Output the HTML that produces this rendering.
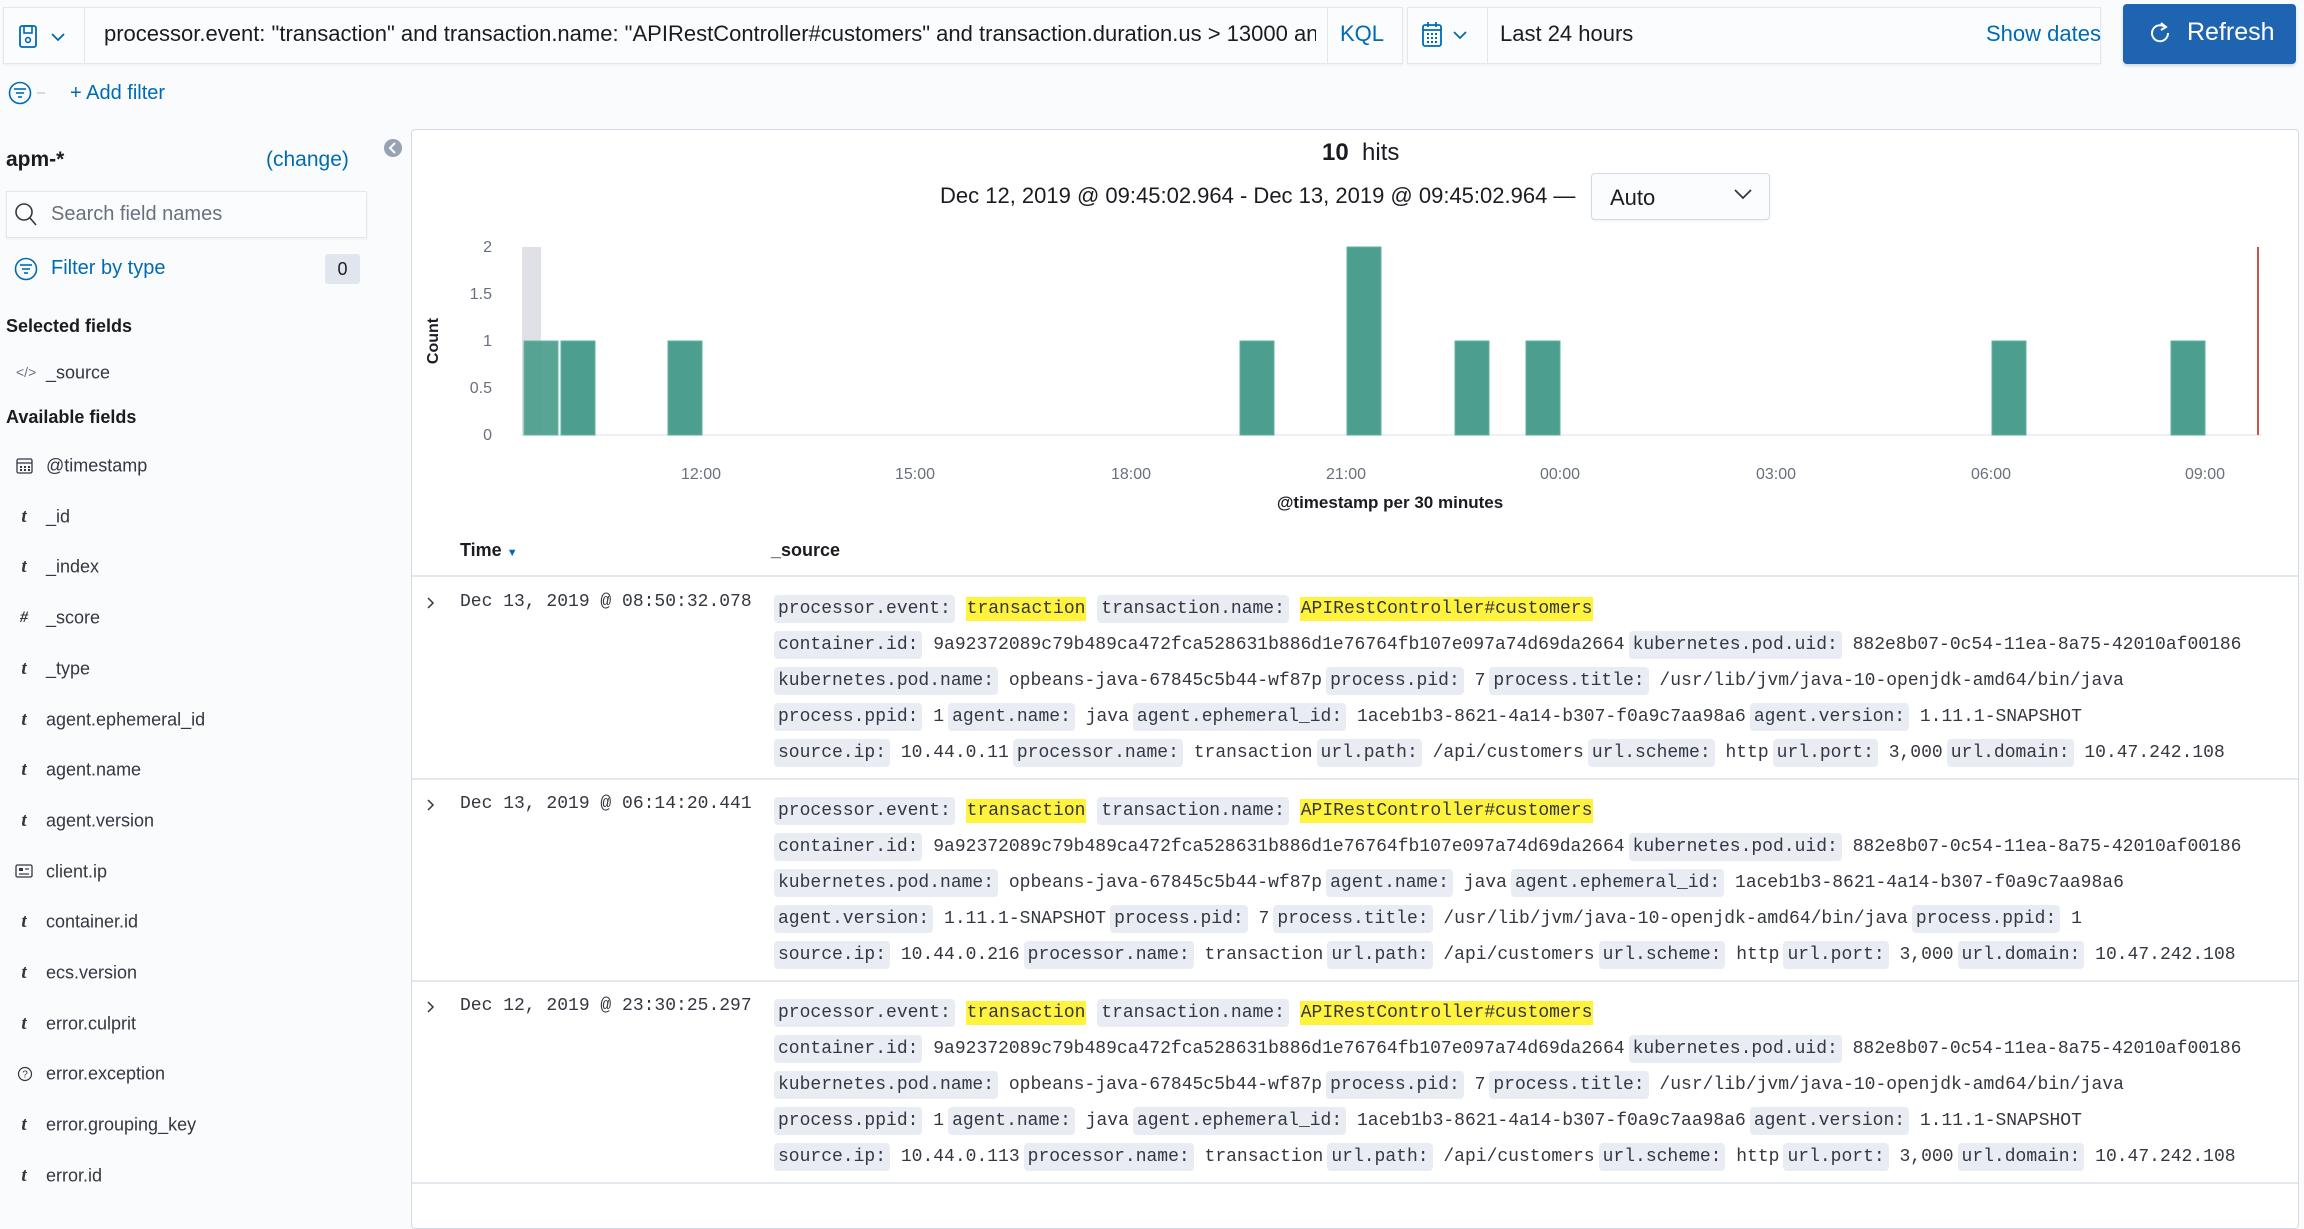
<!DOCTYPE html>
<html><head><meta charset="utf-8"><style>
*{box-sizing:border-box;margin:0;padding:0}
body{width:2304px;height:1192px;overflow:hidden;background:#fafbfd;font-family:"Liberation Sans",sans-serif;color:#343741;position:relative}
.abs{position:absolute}
.box{position:absolute;background:#fbfcfd;border:1px solid #e3e7ee;box-shadow:0 1px 2px rgba(0,0,0,.06)}
.blue{color:#006bb4}
.fld{position:absolute;left:46px;font-size:18px;color:#343741;transform:translateY(-50%)}
.ic{position:absolute;left:16px;width:16px;text-align:center;font-weight:bold;font-style:italic;font-family:"Liberation Serif",serif;font-size:19px;transform:translateY(-50%);color:#343741}
.mono{font-family:"Liberation Mono",monospace;font-size:18px;color:#343741}
.ln{position:absolute;left:774px;white-space:nowrap;line-height:30px;height:30px}
.k{background:#e9edf3;border-radius:4px;padding:4px 4px}
.h{background:#fff33d;padding:2px 1px}
.v{margin-right:4px}
.row{position:absolute;left:412px;width:1886px;border-top:2px solid #e3e7ee}
</style></head><body>

<!-- query bar -->
<div class="box" style="left:3px;top:7px;width:1400px;height:57px"></div>
<div class="abs" style="left:84px;top:8px;width:1px;height:55px;background:#e3e7ee"></div>
<div class="abs" style="left:1327px;top:8px;width:1px;height:55px;background:#e3e7ee"></div>
<svg class="abs" style="left:18px;top:24px" width="56" height="26" viewBox="0 0 56 26"><rect x="2" y="2" width="16" height="21" rx="2" fill="none" stroke="#006bb4" stroke-width="1.8"/><rect x="6" y="2" width="8" height="7" fill="none" stroke="#006bb4" stroke-width="1.6"/><circle cx="10" cy="16" r="2.4" fill="none" stroke="#006bb4" stroke-width="1.6"/><path d="M34 10 l6 6 l6 -6" fill="none" stroke="#006bb4" stroke-width="1.8"/></svg>
<div class="abs" style="left:104px;top:21px;width:1212px;overflow:hidden;white-space:nowrap;font-size:22px;color:#1a1c21">processor.event: "transaction" and transaction.name: "APIRestController#customers" and transaction.duration.us &gt; 13000 and</div>
<div class="abs blue" style="left:1340px;top:21px;font-size:22px">KQL</div>

<div class="box" style="left:1407px;top:7px;height:57px;width:694px"></div>
<div class="abs" style="left:1487px;top:8px;width:1px;height:55px;background:#e3e7ee"></div>
<svg class="abs" style="left:1420px;top:20px" width="60" height="32" viewBox="0 0 60 32"><rect x="3" y="5" width="18" height="21" rx="2" fill="none" stroke="#006bb4" stroke-width="1.8"/><line x1="3" y1="10" x2="21" y2="10" stroke="#006bb4" stroke-width="1.8"/><line x1="8" y1="2" x2="8" y2="7" stroke="#006bb4" stroke-width="1.8"/><line x1="16" y1="2" x2="16" y2="7" stroke="#006bb4" stroke-width="1.8"/><g fill="#006bb4"><rect x="7" y="13" width="2" height="2"/><rect x="11" y="13" width="2" height="2"/><rect x="15" y="13" width="2" height="2"/><rect x="7" y="17" width="2" height="2"/><rect x="11" y="17" width="2" height="2"/><rect x="15" y="17" width="2" height="2"/><rect x="7" y="21" width="2" height="2"/><rect x="11" y="21" width="2" height="2"/><rect x="15" y="21" width="2" height="2"/></g><path d="M34 12 l6 6 l6 -6" fill="none" stroke="#006bb4" stroke-width="1.8"/></svg>
<div class="abs" style="left:1500px;top:21px;font-size:22px;color:#1a1c21">Last 24 hours</div>
<div class="abs blue" style="left:1986px;top:21px;font-size:22px">Show dates</div>

<div class="abs" style="left:2123px;top:4px;width:173px;height:60px;background:#1e64b0;border-radius:4px;box-shadow:0 2px 3px rgba(0,0,0,.15)"></div>
<svg class="abs" style="left:2149px;top:21px" width="24" height="26" viewBox="0 0 24 26"><path d="M16 6 A8 8 0 1 0 19 12" fill="none" stroke="#fff" stroke-width="2"/><path d="M12 2 L17 6 L12 9" fill="none" stroke="#fff" stroke-width="2"/></svg>
<div class="abs" style="left:2187px;top:18px;font-size:25px;color:#fff">Refresh</div>

<!-- add filter -->
<svg class="abs" style="left:8px;top:81px" width="50" height="26" viewBox="0 0 50 26"><circle cx="12" cy="12" r="10.5" fill="none" stroke="#006bb4" stroke-width="1.6"/><line x1="6" y1="8" x2="18" y2="8" stroke="#006bb4" stroke-width="1.6"/><line x1="8" y1="12" x2="16" y2="12" stroke="#006bb4" stroke-width="1.6"/><line x1="10" y1="16" x2="14" y2="16" stroke="#006bb4" stroke-width="1.6"/><line x1="29" y1="12" x2="37" y2="12" stroke="#c5ccd6" stroke-width="1.4"/></svg>
<div class="abs blue" style="left:70px;top:82px;font-size:20px">+ Add filter</div>

<!-- sidebar -->
<div class="abs" style="left:6px;top:148px;font-size:21px;font-weight:bold;color:#1a1c21">apm-*</div>
<div class="abs blue" style="left:266px;top:148px;font-size:21px">(change)</div>
<div class="box" style="left:6px;top:191px;width:361px;height:47px;background:#fbfcfd"></div>
<svg class="abs" style="left:14px;top:202px" width="24" height="26" viewBox="0 0 24 26"><circle cx="10" cy="10" r="8" fill="none" stroke="#343741" stroke-width="1.6"/><line x1="16" y1="16" x2="22" y2="23" stroke="#343741" stroke-width="1.6"/></svg>
<div class="abs" style="left:51px;top:203px;font-size:20px;color:#69707d">Search field names</div>
<svg class="abs" style="left:14px;top:257px" width="26" height="26" viewBox="0 0 26 26"><circle cx="12" cy="12" r="10.5" fill="none" stroke="#006bb4" stroke-width="1.6"/><line x1="6" y1="8" x2="18" y2="8" stroke="#006bb4" stroke-width="1.6"/><line x1="8" y1="12" x2="16" y2="12" stroke="#006bb4" stroke-width="1.6"/><line x1="10" y1="16" x2="14" y2="16" stroke="#006bb4" stroke-width="1.6"/></svg>
<div class="abs blue" style="left:51px;top:257px;font-size:20px">Filter by type</div>
<div class="abs" style="left:325px;top:254px;width:35px;height:30px;background:#e0e5ee;border-radius:3px;text-align:center;line-height:30px;font-size:18px;color:#1a1c21">0</div>
<div class="abs" style="left:6px;top:316px;font-size:18px;font-weight:bold;color:#1a1c21">Selected fields</div>
<div class="abs" style="left:16px;top:364px;font-size:14px;color:#69707d">&lt;/&gt;</div>
<div class="fld" style="top:373px">_source</div>
<div class="abs" style="left:6px;top:407px;font-size:18px;font-weight:bold;color:#1a1c21">Available fields</div>

<svg class="abs" style="left:16px;top:457px" width="18" height="18" viewBox="0 0 18 18"><rect x="1" y="2" width="15" height="14" rx="1.5" fill="none" stroke="#343741" stroke-width="1.3"/><line x1="1" y1="6" x2="16" y2="6" stroke="#343741" stroke-width="1.3"/><g fill="#343741"><rect x="4" y="9" width="2" height="2"/><rect x="8" y="9" width="2" height="2"/><rect x="12" y="9" width="2" height="2"/><rect x="4" y="12" width="2" height="2"/><rect x="8" y="12" width="2" height="2"/><rect x="12" y="12" width="2" height="2"/></g></svg>
<div class="fld" style="top:466px">@timestamp</div>
<div class="ic" style="top:517px">t</div><div class="fld" style="top:517px">_id</div>
<div class="ic" style="top:567px">t</div><div class="fld" style="top:567px">_index</div>
<div class="ic" style="top:618px;font-size:16px">#</div><div class="fld" style="top:618px">_score</div>
<div class="ic" style="top:669px">t</div><div class="fld" style="top:669px">_type</div>
<div class="ic" style="top:720px">t</div><div class="fld" style="top:720px">agent.ephemeral_id</div>
<div class="ic" style="top:770px">t</div><div class="fld" style="top:770px">agent.name</div>
<div class="ic" style="top:821px">t</div><div class="fld" style="top:821px">agent.version</div>
<svg class="abs" style="left:15px;top:863px" width="18" height="16" viewBox="0 0 18 16"><rect x="1" y="2" width="16" height="12" rx="1.5" fill="none" stroke="#343741" stroke-width="1.3"/><rect x="4" y="5" width="4" height="3" fill="#343741"/><line x1="10" y1="6" x2="14" y2="6" stroke="#343741" stroke-width="1.2"/><line x1="4" y1="11" x2="14" y2="11" stroke="#343741" stroke-width="1.2"/></svg>
<div class="fld" style="top:872px">client.ip</div>
<div class="ic" style="top:922px">t</div><div class="fld" style="top:922px">container.id</div>
<div class="ic" style="top:973px">t</div><div class="fld" style="top:973px">ecs.version</div>
<div class="ic" style="top:1024px">t</div><div class="fld" style="top:1024px">error.culprit</div>
<svg class="abs" style="left:17px;top:1066px" width="16" height="16" viewBox="0 0 16 16"><circle cx="8" cy="8" r="6.5" fill="none" stroke="#343741" stroke-width="1.2"/><text x="8" y="11.5" font-size="10" text-anchor="middle" fill="#343741" font-family="Liberation Sans">?</text></svg>
<div class="fld" style="top:1074px">error.exception</div>
<div class="ic" style="top:1125px">t</div><div class="fld" style="top:1125px">error.grouping_key</div>
<div class="ic" style="top:1176px">t</div><div class="fld" style="top:1176px">error.id</div>

<!-- collapse btn -->
<svg class="abs" style="left:383px;top:138px" width="20" height="20" viewBox="0 0 20 20"><circle cx="10" cy="10" r="9" fill="#98a2b3"/><path d="M12 5 L7 10 L12 15" fill="none" stroke="#fff" stroke-width="2"/></svg>

<!-- main panel -->
<div class="abs" style="left:411px;top:129px;width:1888px;height:1100px;background:#fff;border:1px solid #d3dae6;border-radius:4px"></div>
<div class="abs" style="left:1322px;top:139px;font-size:24px;color:#1a1c21"><b>10</b>&nbsp; hits</div>
<div class="abs" style="left:940px;top:183px;font-size:22px;color:#1a1c21">Dec 12, 2019 @ 09:45:02.964 - Dec 13, 2019 @ 09:45:02.964 —</div>
<div class="abs" style="left:1591px;top:173px;width:179px;height:47px;background:#fbfcfd;border:1px solid #d3dae6;border-radius:4px;box-shadow:0 1px 2px rgba(0,0,0,.06)"></div>
<div class="abs" style="left:1610px;top:185px;font-size:22px;color:#1a1c21">Auto</div>
<svg class="abs" style="left:1733px;top:186px" width="20" height="16" viewBox="0 0 20 16"><path d="M2 4 L10 12 L18 4" fill="none" stroke="#343741" stroke-width="1.8"/></svg>

<svg class="abs" style="left:411px;top:230px" width="1888" height="290" viewBox="411 230 1888 290" font-family="Liberation Sans" font-size="16" fill="#69707d">
<line x1="521" y1="435" x2="2262" y2="435" stroke="#eef0f4" stroke-width="2"/>
<text x="492" y="252" text-anchor="end">2</text>
<text x="492" y="299" text-anchor="end">1.5</text>
<text x="492" y="346" text-anchor="end">1</text>
<text x="492" y="393" text-anchor="end">0.5</text>
<text x="492" y="440" text-anchor="end">0</text>
<text transform="translate(438,341) rotate(-90)" text-anchor="middle" font-weight="bold" font-size="16" fill="#1a1c21">Count</text>
<rect x="522" y="247" width="19" height="188" fill="#e0e1e6"/>
<g fill="#4c9f8e" stroke="#5fb3a0" stroke-width="1">
<rect x="524" y="341" width="34" height="94" opacity="0.93"/>
<rect x="561" y="341" width="34" height="94"/>
<rect x="668" y="341" width="34" height="94"/>
<rect x="1240" y="341" width="34" height="94"/>
<rect x="1347" y="247" width="34" height="188"/>
<rect x="1455" y="341" width="34" height="94"/>
<rect x="1526" y="341" width="34" height="94"/>
<rect x="1992" y="341" width="34" height="94"/>
<rect x="2171" y="341" width="34" height="94"/>
</g>
<line x1="2258" y1="247" x2="2258" y2="435" stroke="#d0524b" stroke-width="2"/>
<g text-anchor="middle">
<text x="701" y="479">12:00</text><text x="915" y="479">15:00</text><text x="1131" y="479">18:00</text><text x="1346" y="479">21:00</text><text x="1560" y="479">00:00</text><text x="1776" y="479">03:00</text><text x="1991" y="479">06:00</text><text x="2205" y="479">09:00</text>
</g>
<text x="1390" y="508" text-anchor="middle" font-weight="bold" font-size="17" fill="#1a1c21">@timestamp per 30 minutes</text>
</svg>

<!-- table header -->
<div class="abs" style="left:460px;top:540px;font-size:18px;font-weight:bold;color:#1a1c21">Time <span style="font-size:11px;color:#006bb4">▼</span></div>
<div class="abs" style="left:771px;top:540px;font-size:18px;font-weight:bold;color:#1a1c21">_source</div>

<div class="row" style="top:575px;height:205px"></div>
<div class="row" style="top:778px;height:204px"></div>
<div class="row" style="top:980px;height:204px;border-bottom:2px solid #e3e7ee"></div>

<div class="mono">
<!-- row 1 -->
<svg class="abs" style="left:425px;top:596px" width="12" height="14" viewBox="0 0 12 14"><path d="M3 2 L8 7 L3 12" fill="none" stroke="#343741" stroke-width="1.5"/></svg>
<div class="abs" style="left:460px;top:592px">Dec 13, 2019 @ 08:50:32.078</div>
<div class="ln" style="top:594px"><span class="k">processor.event:</span> <span class="h">transaction</span> <span class="k">transaction.name:</span> <span class="h">APIRestController#customers</span></div>
<div class="ln" style="top:630px"><span class="k">container.id:</span> <span class="v">9a92372089c79b489ca472fca528631b886d1e76764fb107e097a74d69da2664</span><span class="k">kubernetes.pod.uid:</span> 882e8b07-0c54-11ea-8a75-42010af00186</div>
<div class="ln" style="top:666px"><span class="k">kubernetes.pod.name:</span> <span class="v">opbeans-java-67845c5b44-wf87p</span><span class="k">process.pid:</span> <span class="v">7</span><span class="k">process.title:</span> /usr/lib/jvm/java-10-openjdk-amd64/bin/java</div>
<div class="ln" style="top:702px"><span class="k">process.ppid:</span> <span class="v">1</span><span class="k">agent.name:</span> <span class="v">java</span><span class="k">agent.ephemeral_id:</span> <span class="v">1aceb1b3-8621-4a14-b307-f0a9c7aa98a6</span><span class="k">agent.version:</span> 1.11.1-SNAPSHOT</div>
<div class="ln" style="top:738px"><span class="k">source.ip:</span> <span class="v">10.44.0.11</span><span class="k">processor.name:</span> <span class="v">transaction</span><span class="k">url.path:</span> <span class="v">/api/customers</span><span class="k">url.scheme:</span> <span class="v">http</span><span class="k">url.port:</span> <span class="v">3,000</span><span class="k">url.domain:</span> 10.47.242.108</div>

<!-- row 2 -->
<svg class="abs" style="left:425px;top:798px" width="12" height="14" viewBox="0 0 12 14"><path d="M3 2 L8 7 L3 12" fill="none" stroke="#343741" stroke-width="1.5"/></svg>
<div class="abs" style="left:460px;top:794px">Dec 13, 2019 @ 06:14:20.441</div>
<div class="ln" style="top:796px"><span class="k">processor.event:</span> <span class="h">transaction</span> <span class="k">transaction.name:</span> <span class="h">APIRestController#customers</span></div>
<div class="ln" style="top:832px"><span class="k">container.id:</span> <span class="v">9a92372089c79b489ca472fca528631b886d1e76764fb107e097a74d69da2664</span><span class="k">kubernetes.pod.uid:</span> 882e8b07-0c54-11ea-8a75-42010af00186</div>
<div class="ln" style="top:868px"><span class="k">kubernetes.pod.name:</span> <span class="v">opbeans-java-67845c5b44-wf87p</span><span class="k">agent.name:</span> <span class="v">java</span><span class="k">agent.ephemeral_id:</span> 1aceb1b3-8621-4a14-b307-f0a9c7aa98a6</div>
<div class="ln" style="top:904px"><span class="k">agent.version:</span> <span class="v">1.11.1-SNAPSHOT</span><span class="k">process.pid:</span> <span class="v">7</span><span class="k">process.title:</span> <span class="v">/usr/lib/jvm/java-10-openjdk-amd64/bin/java</span><span class="k">process.ppid:</span> 1</div>
<div class="ln" style="top:940px"><span class="k">source.ip:</span> <span class="v">10.44.0.216</span><span class="k">processor.name:</span> <span class="v">transaction</span><span class="k">url.path:</span> <span class="v">/api/customers</span><span class="k">url.scheme:</span> <span class="v">http</span><span class="k">url.port:</span> <span class="v">3,000</span><span class="k">url.domain:</span> 10.47.242.108</div>

<!-- row 3 -->
<svg class="abs" style="left:425px;top:1000px" width="12" height="14" viewBox="0 0 12 14"><path d="M3 2 L8 7 L3 12" fill="none" stroke="#343741" stroke-width="1.5"/></svg>
<div class="abs" style="left:460px;top:996px">Dec 12, 2019 @ 23:30:25.297</div>
<div class="ln" style="top:998px"><span class="k">processor.event:</span> <span class="h">transaction</span> <span class="k">transaction.name:</span> <span class="h">APIRestController#customers</span></div>
<div class="ln" style="top:1034px"><span class="k">container.id:</span> <span class="v">9a92372089c79b489ca472fca528631b886d1e76764fb107e097a74d69da2664</span><span class="k">kubernetes.pod.uid:</span> 882e8b07-0c54-11ea-8a75-42010af00186</div>
<div class="ln" style="top:1070px"><span class="k">kubernetes.pod.name:</span> <span class="v">opbeans-java-67845c5b44-wf87p</span><span class="k">process.pid:</span> <span class="v">7</span><span class="k">process.title:</span> /usr/lib/jvm/java-10-openjdk-amd64/bin/java</div>
<div class="ln" style="top:1106px"><span class="k">process.ppid:</span> <span class="v">1</span><span class="k">agent.name:</span> <span class="v">java</span><span class="k">agent.ephemeral_id:</span> <span class="v">1aceb1b3-8621-4a14-b307-f0a9c7aa98a6</span><span class="k">agent.version:</span> 1.11.1-SNAPSHOT</div>
<div class="ln" style="top:1142px"><span class="k">source.ip:</span> <span class="v">10.44.0.113</span><span class="k">processor.name:</span> <span class="v">transaction</span><span class="k">url.path:</span> <span class="v">/api/customers</span><span class="k">url.scheme:</span> <span class="v">http</span><span class="k">url.port:</span> <span class="v">3,000</span><span class="k">url.domain:</span> 10.47.242.108</div>
</div>
</body></html>
